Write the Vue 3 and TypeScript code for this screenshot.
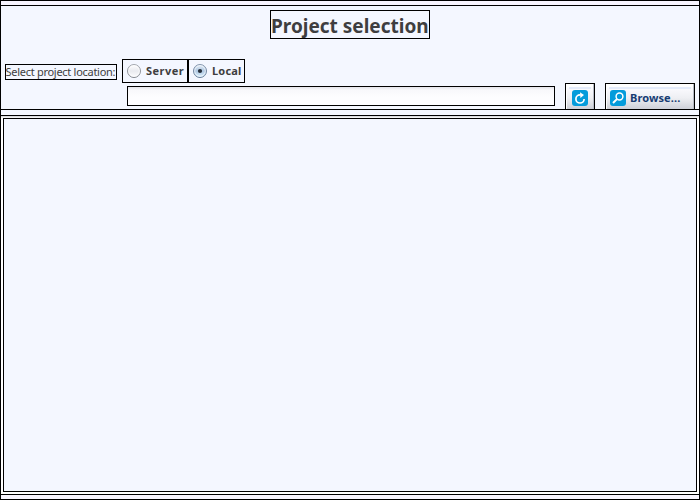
<script setup lang="ts">
import { ref } from 'vue'

const options = ['Server', 'Local']
const selected = ref('Local')
const path = ref('')
</script>

<template>
  <div class="window">
    <div class="strip"></div>
    <header class="head">
      <h1 class="title"><span>Project selection</span></h1>
      <div class="location">
        <span class="caption"><span>Select project location:</span></span>
        <div class="radios">
          <label v-for="o in options" :key="o" class="radio" :class="o.toLowerCase()" @click="selected = o">
            <svg width="16" height="16" viewBox="0 0 16 16">
              <defs>
                <linearGradient :id="'face' + o" x1="0" y1="0" x2="0" y2="1">
                  <stop offset="0" :stop-color="o === selected ? '#e4edf7' : '#ffffff'" />
                  <stop offset="0.5" :stop-color="o === selected ? '#b0c8e2' : '#e9eaef'" />
                  <stop offset="1" :stop-color="o === selected ? '#dcf2ff' : '#fdfdff'" />
                </linearGradient>
                <linearGradient :id="'rim' + o" x1="0" y1="0" x2="0" y2="1">
                  <stop offset="0" :stop-color="o === selected ? '#8496ad' : '#a2a6ad'" />
                  <stop offset="1" :stop-color="o === selected ? '#647b98' : '#80848c'" />
                </linearGradient>
              </defs>
              <circle cx="7" cy="8" r="6.5" :fill="`url(#face${o})`" :stroke="`url(#rim${o})`" />
              <circle cx="7" cy="8" r="5.3" fill="none" stroke="#fff" stroke-opacity="0.6" />
              <circle v-if="o === selected" cx="7" cy="8" r="2.1" fill="#26303c" />
            </svg>
            <span>{{ o }}</span>
          </label>
        </div>
      </div>
      <div class="path">
        <input v-model="path" class="field" type="text" />
        <button class="btn refresh">
          <svg width="16" height="16" viewBox="0 0 16 16">
            <rect width="16" height="16" rx="3" fill="#049cdb" />
            <path d="M8.6 4.8H8A4.1 4.1 0 1 0 12.1 8.9" fill="none" stroke="#fff" stroke-width="1.7" />
            <path d="M8 2.2L12 4.9L8.4 8Z" fill="#fff" />
          </svg>
        </button>
        <button class="btn browse">
          <svg width="16" height="16" viewBox="0 0 16 16">
            <rect width="16" height="16" rx="3" fill="#049cdb" />
            <circle cx="9.5" cy="6.5" r="3.4" fill="none" stroke="#fff" stroke-width="1.5" />
            <path d="M6.9 9.1L3 13" stroke="#fff" stroke-width="2" />
          </svg>
          <span>Browse...</span>
        </button>
      </div>
    </header>
    <main class="body"><div class="list"></div></main>
    <div class="strip foot"></div>
  </div>
</template>

<style>
body {
  background: #f4f7ff;
}
</style>

<style scoped>
* {
  box-sizing: border-box;
}
.window {
  width: 700px;
  height: 500px;
  display: flex;
  flex-direction: column;
  border: 1px solid #000;
  background: #f4f7ff;
  color: #3e3e40;
  font-family: "Noto Sans", sans-serif;
  overflow: hidden;
}
.strip {
  height: 5px;
  flex: none;
  background: #f8f5ff;
  border-bottom: 1px solid #000;
}
.foot {
  height: 5px;
  border-bottom: 0;
  border-top: 1px solid #000;
}
.head {
  flex: none;
  height: 104px;
  padding-top: 4px;
  border-bottom: 1px solid #000;
}
.title {
  width: 160px;
  height: 29px;
  margin: 0 0 0 269px;
  border: 1px solid #000;
  font-size: 19px;
  line-height: 31px;
  font-weight: 700;
  white-space: nowrap;
}
.location {
  display: flex;
  align-items: center;
  height: 24px;
  margin: 20px 0 0 4px;
}
.caption {
  width: 112px;
  height: 16px;
  margin-top: 2px;
  border: 1px solid #000;
  font-size: 11px;
  line-height: 14px;
  white-space: nowrap;
  letter-spacing: -0.28px;
}
.caption span {
  margin-left: -0.5px;
}
.radios {
  display: flex;
  margin-left: 5px;
}
.radio {
  display: flex;
  align-items: center;
  height: 24px;
  border: 1px solid #000;
  padding-left: 4px;
  font-size: 11px;
  line-height: 14px;
  font-weight: 700;
}
.radio span {
  margin-top: -1px;
  letter-spacing: 0.45px;
}
.local span {
  letter-spacing: 0.2px;
}
.radio svg {
  margin-right: 3px;
}
.server {
  width: 66px;
}
.local {
  width: 57px;
}
.path {
  display: flex;
  height: 26px;
  padding-left: 126px;
}
.field {
  width: 428px;
  height: 20px;
  margin: 3px 10px 0 0;
  padding: 0 3px;
  border: 1px solid #000;
  border-radius: 0;
  outline: none;
  background: linear-gradient(#e4e4ea, #f8f8fb 3px, #fdfdff 10px);
}
.btn {
  display: flex;
  align-items: center;
  height: 26px;
  padding: 3px 0 0;
  border: 1px solid #000;
  border-bottom: 0;
  border-radius: 0;
  background:
    linear-gradient(#e3ebfb, #e3ebfb) 3px 3px / calc(100% - 6px) 2px no-repeat,
    linear-gradient(#fff 2px, #f8f8fc 6px, #eeeff3 14px, #cdd0d8 25px);
  box-shadow: inset 1px 0 #fff, inset -1px 0 #b5bac6;
  color: #173c73;
  font: 700 11px "Noto Sans", sans-serif;
}
.refresh {
  width: 30px;
  margin-right: 10px;
  padding-left: 6px;
}
.browse {
  width: 90px;
  padding-left: 4px;
  gap: 4px;
}
.browse span {
  line-height: 14px;
  margin-top: -1px;
  letter-spacing: 0.1px;
}
.body {
  flex: 1;
  margin-top: 5px;
  padding: 2px;
  border-top: 1px solid #000;
  background: linear-gradient(#d0d1d5, #fff 2px);
}
.list {
  height: 100%;
  border: 1px solid #000;
  background: #f4f7ff;
}
</style>
